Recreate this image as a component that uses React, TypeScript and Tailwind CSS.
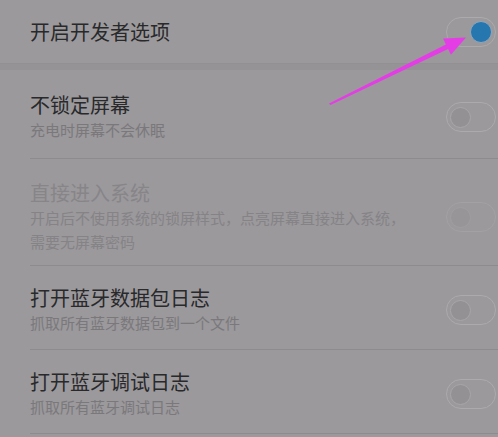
import React from "react";

type Row = {
  title: string;
  lines: string[];
  disabled?: boolean;
  pad: string;
};

const rows: Row[] = [
  { title: "不锁定屏幕", lines: ["充电时屏幕不会休眠"], pad: "pt-[22px] pb-[16px]" },
  {
    title: "直接进入系统",
    lines: ["开启后不使用系统的锁屏样式，点亮屏幕直接进入系统，", "需要无屏幕密码"],
    disabled: true,
    pad: "pt-[21px] pb-[11px]",
  },
  { title: "打开蓝牙数据包日志", lines: ["抓取所有蓝牙数据包到一个文件"], pad: "pt-[19px] pb-[14px]" },
  { title: "打开蓝牙调试日志", lines: ["抓取所有蓝牙调试日志"], pad: "pt-[19px] pb-[14px]" },
];

function Toggle({ on = false, faded = false }: { on?: boolean; faded?: boolean }) {
  return (
    <div
      className={`relative w-[50px] h-[30px] shrink-0 rounded-full border ${
        faded ? "border-[#a3a1a4]" : "border-[#acaaad]"
      } bg-[#9b999c]`}
    >
      {on ? (
        <span className="absolute right-[3px] top-[3px] w-[22px] h-[22px] rounded-full bg-[#2677b0] border border-[#8fa6b8]" />
      ) : (
        <span
          className={`absolute left-[3px] top-[3.5px] w-[21px] h-[21px] rounded-full border ${
            faded ? "bg-[#979598] border-[#a09ea1]" : "bg-[#939194] border-[#a8a6a9]"
          }`}
        />
      )}
    </div>
  );
}

export default function App() {
  return (
    <div
      className="relative w-[498px] h-[437px] overflow-hidden bg-[#9b999c]"
      style={{ fontFamily: "'Noto Sans CJK SC', 'Noto Sans', sans-serif" }}
    >
      {/* Developer options master switch */}
      <div className="h-[63px] flex items-center justify-between pl-[30px] pr-[2px]">
        <span className="text-[20px] leading-[26px] text-[#29292b]">开启开发者选项</span>
        <Toggle on />
      </div>
      <div className="h-[7px] bg-[#959396] border-t border-[#929093]" />

      {rows.map((r) => (
        <div key={r.title} className="pl-[30px]">
          <div className={`flex items-center justify-between pr-[2px] ${r.pad}`}>
            <div>
              <div
                className={`text-[20px] leading-[26px] ${r.disabled ? "text-[#878588]" : "text-[#29292b]"}`}
              >
                {r.title}
              </div>
              {r.lines.map((l) => (
                <div
                  key={l}
                  className={`text-[15px] leading-[24px] ${r.disabled ? "text-[#858386]" : "text-[#7a787b]"}`}
                >
                  {l}
                </div>
              ))}
            </div>
            <Toggle faded={r.disabled} />
          </div>
          <div className="h-px bg-[#8d8b8e]" />
        </div>
      ))}

      {/* annotation arrow */}
      <svg className="absolute inset-0 pointer-events-none" width="498" height="437" viewBox="0 0 498 437">
        <polygon
          points="329,103.5 445.9,44.45 443.1,38.6 466,37.5 450.9,54.8 448.1,48.95 330.5,105"
          fill="#e53de6"
        />
      </svg>
    </div>
  );
}
